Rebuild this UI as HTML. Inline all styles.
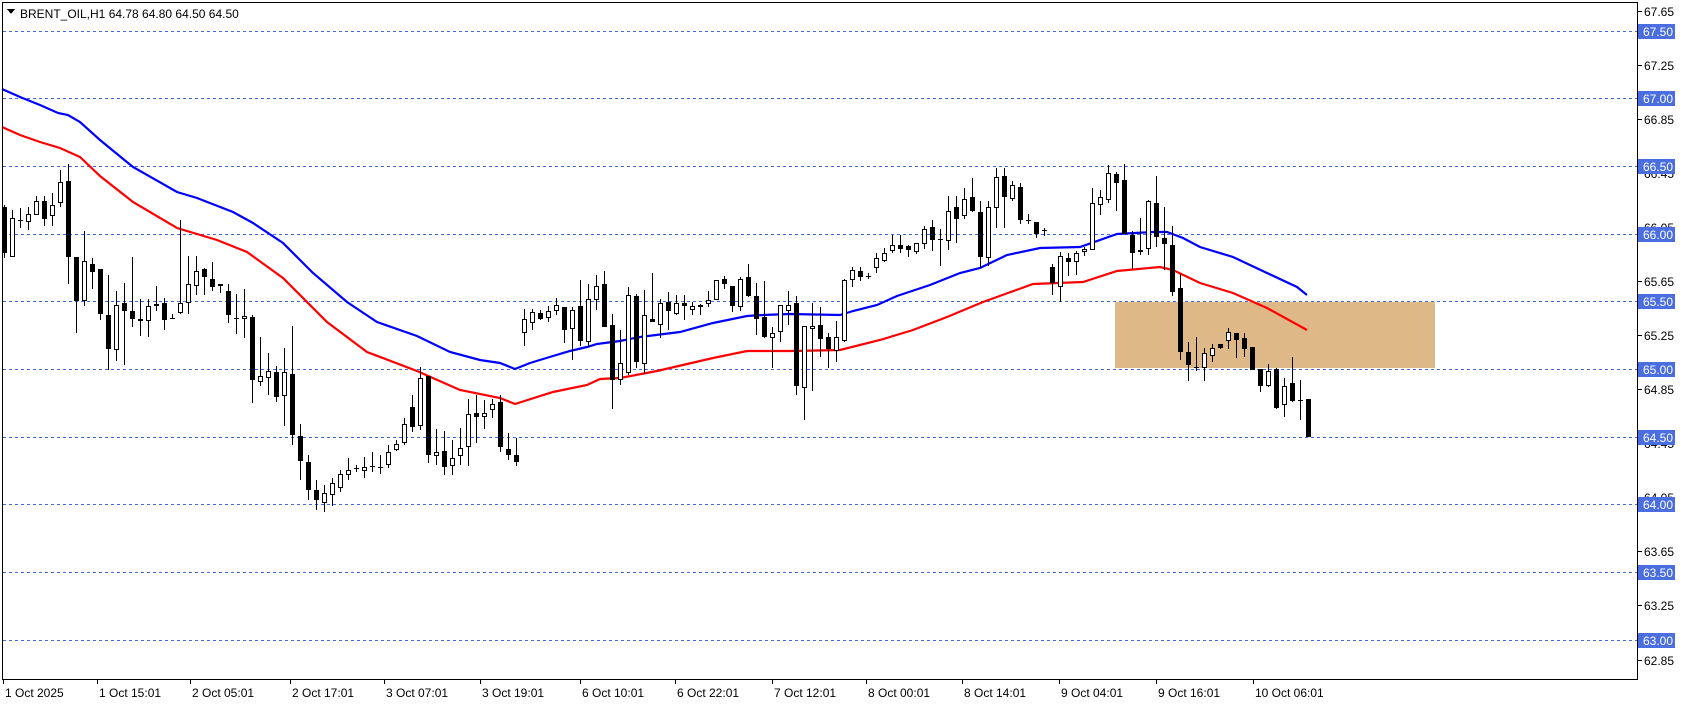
<!DOCTYPE html>
<html><head><meta charset="utf-8"><style>
html,body{margin:0;padding:0;background:#fff;width:1686px;height:706px;overflow:hidden}
svg{display:block;font-family:"Liberation Sans",Tahoma,sans-serif}
</style></head><body>
<svg id="s" width="1686" height="706" xmlns="http://www.w3.org/2000/svg" shape-rendering="crispEdges">
<rect x="1115" y="302" width="320" height="66" fill="#deb887"/>
<g id="grid"></g>
<g id="ma" shape-rendering="auto" fill="none" stroke-width="2.2">
<polyline stroke="#0000ff" points="2,89 20,97 40,105 58,113 68,115 80,122 100,140 133,167 177,192 197,198 233,212 253,223 283,243 313,273 347,302 377,322 417,336 450,352 480,360 500,363 515,369 530,363 553,356 570,351 587,347 597,344 620,341 640,337 680,332 713,323 747,316 763,315 790,314 840,315 853,311 877,305 897,296 930,285 960,273 980,268 1007,255 1040,248 1080,247 1117,234 1153,232 1167,232 1183,238 1200,247 1233,257 1267,273 1297,287 1307,295"/>
<polyline stroke="#ff0000" points="2,127 20,135 40,142 60,148 80,157 100,176 133,202 177,228 217,240 247,252 283,278 327,322 367,352 417,371 460,390 500,398 515,404 553,392 587,385 600,379 620,378 657,371 713,358 747,351 793,351 840,350 880,340 913,330 947,317 983,302 1033,284 1083,282 1117,271 1160,267 1173,270 1200,283 1233,293 1267,308 1307,330"/>
</g>
<g id="c"></g>
<line x1="2.5" y1="2" x2="2.5" y2="679" stroke="#000"/>
<line x1="2" y1="2.5" x2="1637" y2="2.5" stroke="#000"/>
<line x1="1637.5" y1="2" x2="1637.5" y2="680" stroke="#000"/>
<line x1="2" y1="679.5" x2="1638" y2="679.5" stroke="#000"/>
<g id="ax" font-size="12"></g>
<polygon points="7,9 15,9 11,14" fill="#000"/>
<text x="20" y="18" font-size="12">BRENT_OIL,H1  64.78 64.80 64.50 64.50</text>
</svg>
<script>
var NS="http://www.w3.org/2000/svg";
function el(p,t,a,txt){var e=document.createElementNS(NS,t);for(var k in a)e.setAttribute(k,a[k]);if(txt!=null)e.textContent=txt;p.appendChild(e);return e;}
var D=[
[207,253,0,205,258],[218,257,1,210,257],[220,221,2,208,228],[214,222,1,207,230],[201,215,1,196,215],[201,219,0,196,226],[205,216,1,193,226],[182,203,1,170,207],[181,257,0,164,284],[257,301,0,257,333],
[261,301,1,231,306],[264,272,0,258,289],[269,314,0,275,320],[315,349,0,275,370],[305,350,1,291,361],[303,311,0,283,365],[311,319,0,257,327],[319,321,1,299,336],[306,321,1,299,337],[304,306,1,286,311],
[303,320,0,298,330],[318,319,2,314,318],[303,313,1,220,314],[284,303,1,256,314],[271,286,1,256,295],[269,277,0,268,295],[279,287,0,262,291],[284,286,0,284,293],[291,315,0,284,323],[318,319,2,294,334],
[316,319,1,289,338],[317,380,0,315,403],[376,382,1,337,386],[371,378,1,353,395],[372,397,0,366,402],[372,396,1,348,426],[374,435,0,326,445],[436,461,0,424,480],[462,490,0,455,500],[490,500,0,480,510],
[493,503,1,485,512],[483,495,1,478,506],[474,488,1,470,492],[470,475,1,458,480],[468,469,2,465,472],[467,471,1,457,478],[466,467,2,452,472],[467,468,2,455,474],[452,465,1,445,468],[444,450,1,440,451],
[424,443,1,418,445],[407,427,0,395,432],[378,426,1,367,430],[376,455,0,376,463],[452,456,1,429,465],[451,467,0,431,475],[458,466,1,440,475],[448,456,1,428,465],[414,447,1,399,466],[413,417,0,395,443],
[413,417,1,400,429],[404,410,1,399,418],[402,447,0,395,452],[449,455,0,433,460],[455,462,0,438,466],
[319,333,1,309,346],[312,323,1,309,330],[313,319,0,310,320],[311,318,1,306,322],[305,311,1,298,315],[307,330,0,307,343],[310,329,1,307,360],[306,341,0,280,346],[299,342,1,284,347],[286,300,1,275,310],
[284,327,0,271,327],[325,380,0,314,409],[363,380,1,330,385],[295,373,1,287,375],[296,362,0,294,368],[315,364,1,290,374],[319,322,0,273,322],[303,325,1,299,338],[302,311,0,292,330],[303,314,1,295,315],
[303,306,0,295,320],[306,310,1,302,315],[305,306,0,304,315],[300,304,1,291,307],[280,300,1,280,300],[279,284,0,276,289],[286,306,0,286,312],[279,307,1,277,311],[277,296,0,264,297],[296,319,0,283,335],
[317,337,0,281,338],[333,338,1,327,368],[305,332,1,307,342],[305,311,1,291,325],[303,386,0,296,395],[326,388,1,327,420],[326,329,1,303,391],[325,339,0,307,357],[337,349,0,333,368],[337,351,1,321,362],
[280,341,1,279,342],[270,280,1,267,287],[271,277,0,267,281],[276,277,2,273,279],[258,268,1,253,273],[253,261,1,248,262],[245,251,1,235,253],[245,249,0,235,253],[246,250,0,245,257],[243,252,1,243,254],
[229,244,1,226,249],[227,240,0,220,251],[239,240,2,229,266],[211,241,1,196,250],[207,219,0,196,243],[199,216,1,188,219],[197,211,0,178,212],[212,257,0,201,268],[207,258,1,201,266],[177,208,1,168,228],
[176,197,0,168,228],[185,199,1,181,201],[187,220,0,183,224],[220,221,2,214,224],[222,234,0,222,238],[230,231,2,228,236],[267,283,0,264,295],[256,287,1,252,302],[258,262,0,253,276],[253,262,1,251,275],
[249,252,1,247,256],[203,250,1,188,250],[197,205,1,190,215],[173,200,1,165,203],[174,183,0,172,211],[180,234,0,164,234],[235,253,0,231,269],[250,252,1,218,255],[201,249,1,200,255],[203,237,0,176,247],
[238,244,0,207,270],[245,292,0,226,296],[288,352,0,274,360],[352,365,0,342,381],[367,368,2,337,371],[353,368,1,348,381],[348,356,1,344,362],[344,348,0,344,349],[332,341,1,328,349],[333,340,0,333,358],
[338,349,0,333,357],[347,370,0,347,370],[369,386,0,369,392],[371,386,1,364,387],[369,408,0,368,409],[386,405,1,378,417],[383,401,0,357,402],[400,401,2,380,420],[399,437,0,399,437]
];
var cg=document.getElementById('c');
for(var i=0;i<D.length;i++){var d=D[i],x=4+8*i;
 el(cg,'rect',{x:x,y:d[3],width:1,height:Math.max(1,d[4]-d[3]),fill:'#000'});
 if(d[2]==0) el(cg,'rect',{x:x-2,y:d[0],width:5,height:Math.max(2,d[1]-d[0]),fill:'#000'});
 else if(d[2]==1) el(cg,'rect',{x:x-1.5,y:d[0]+0.5,width:4,height:Math.max(1,d[1]-d[0]-1),fill:'#fff',stroke:'#000','stroke-width':1});
 else el(cg,'rect',{x:x-2,y:d[0],width:5,height:1,fill:'#000'});
}
var g=document.getElementById('grid'),ax=document.getElementById('ax');
var grid=[["67.50",31],["67.00",98],["66.50",166],["66.00",234],["65.50",301],["65.00",369],["64.50",437],["64.00",504],["63.50",572],["63.00",640]];
var lab=[["67.65",11],["67.25",65],["66.85",119],["66.45",173],["66.05",227],["65.65",281],["65.25",335],["64.85",389],["64.45",443],["64.05",497],["63.65",551],["63.25",605],["62.85",660]];
lab.forEach(function(l){el(ax,'rect',{x:1638,y:l[1],width:4,height:1,fill:'#000'});el(ax,'text',{x:1644,y:l[1]+5,fill:'#000'},l[0]);});
grid.forEach(function(l){el(g,'line',{x1:3,y1:l[1]+0.5,x2:1637,y2:l[1]+0.5,stroke:'#4169e1','stroke-dasharray':'3,3'});
 el(ax,'rect',{x:1638,y:l[1]-7,width:37,height:15,fill:'#4a6ee0'});
 el(ax,'text',{x:1643,y:l[1]+5,fill:'#fff'},l[0]);});
var tl=[["1 Oct 2025",3],["1 Oct 15:01",97],["2 Oct 05:01",190],["2 Oct 17:01",290],["3 Oct 07:01",384],["3 Oct 19:01",480],["6 Oct 10:01",580],["6 Oct 22:01",675],["7 Oct 12:01",772],["8 Oct 00:01",866],["8 Oct 14:01",962],["9 Oct 04:01",1059],["9 Oct 16:01",1156],["10 Oct 06:01",1253]];
tl.forEach(function(t){el(ax,'rect',{x:t[1],y:680,width:1,height:4,fill:'#000'});el(ax,'text',{x:t[1]+2,y:697,fill:'#000'},t[0]);});
</script>
</body></html>
